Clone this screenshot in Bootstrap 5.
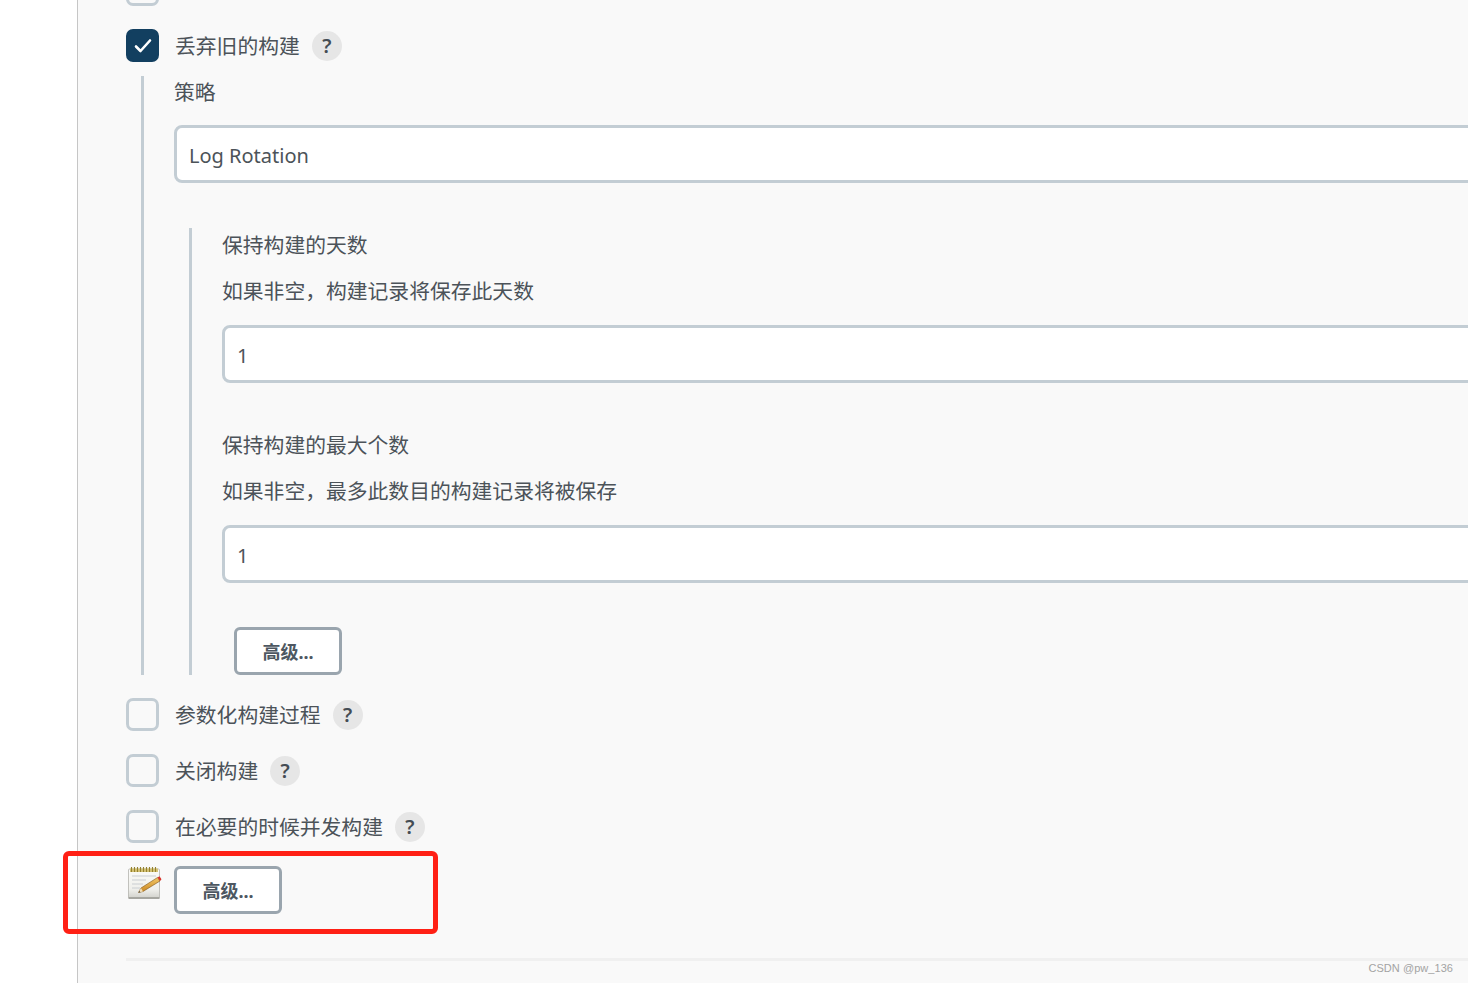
<!DOCTYPE html>
<html lang="zh-CN">
<head>
  <meta charset="UTF-8" />
  <title>丢弃旧的构建</title>
  <link href="https://cdn.jsdelivr.net/npm/bootstrap@5.3.3/dist/css/bootstrap.min.css" rel="stylesheet"/>
  <script src="https://cdn.jsdelivr.net/npm/bootstrap@5.3.3/dist/js/bootstrap.bundle.min.js"></script>
  <style>
    html, body { height: 983px; overflow: hidden; background: #fff; }
    body { font-family: "Noto Sans", "Noto Sans CJK SC", sans-serif; font-size: 20.8px; color: #4c5359; }
    .page-wrap { height: 983px; overflow: hidden; position: relative; }
    .side-gap { width: 77px; flex: none; background: #fff; }
    .main-area { width: 1600px; flex: none; background: #f9f9f9; border-left: 1px solid #c6c6c6; padding-left: 48px; }
    .scroll-up { margin-top: -27px; }

    .opt-row { gap: 16px; margin-bottom: 23px; height: 33px; }
    .opt-row .form-check-input { width: 33px; height: 33px; margin: 0; flex: none; border: 3px solid #c3cdd4; border-radius: 7px; background-color: #f9f9f9; }
    .opt-row .form-check-input:checked { background-color: #123f60; border-color: #123f60; background-size: 20px 20px;
      background-image: url("data:image/svg+xml,%3Csvg xmlns='http://www.w3.org/2000/svg' viewBox='0 0 20 20'%3E%3Cpath fill='none' stroke='%23fff' stroke-width='2.6' stroke-linecap='round' stroke-linejoin='round' d='M3 10.5l4.5 4.5L17 4.5'/%3E%3C/svg%3E"); }
    .opt-text { line-height: 33px; padding-top: 1px; }
    .help-dot { width: 30px; height: 30px; margin-left: -4px; border-radius: 50%; background: #e6e6e6; color: #444c54; font-size: 20px; font-weight: 600; line-height: 30px; text-align: center; }

    .nest-one { border-left: 3px solid #c3cdd4; margin-left: 15px; margin-top: -9px; margin-bottom: 23px; padding-left: 30px; height: 599px; }
    .nest-two { border-left: 3px solid #c3cdd4; margin-left: 15px; padding-left: 30px; height: 447px; margin-top: 45px; }
    .field-name { line-height: 32px; margin-bottom: 17px; }
    .nest-two .field-name { padding-top: 1px; margin-bottom: 14px; }
    .field-desc { line-height: 32px; margin-bottom: 18px; }
    .field-box.form-control, .field-box.form-select { height: 58px; border: 3px solid #c3cdd4; border-radius: 8px; padding: 3px 12px 0; font-size: 20px; color: #4c5359; background-color: #fff; box-shadow: none; }
    .field-gap { margin-bottom: 45px; }
    .adv-btn.btn { width: 108px; height: 48px; padding: 0; border: 3px solid #9aa5ae; border-radius: 6px; background: #fff; color: #4d5761; font-size: 18px; font-weight: 700; line-height: 44px; }
    .adv-push { margin-left: 12px; margin-top: 44px; }
    .note-row { gap: 12px; height: 48px; }
    .note-icon { width: 34px; height: 34px; flex: none; margin-left: 2px; }
    .foot-line { height: 3px; background: #f0f0f0; margin-top: 44px; }

    .red-mark { position: absolute; left: 63px; top: 851px; width: 375px; height: 83px; border: 5px solid #ff2015; border-radius: 6px; }
    .csdn-mark { position: absolute; right: 15px; top: 961px; font-family: "Liberation Sans", sans-serif; font-size: 11px; letter-spacing: .05px; line-height: 14px; color: #a3a3a3; }
  </style>
</head>
<body>

  <div class="page-wrap d-flex">
    <div class="side-gap"></div>
    <div class="main-area">
      <div class="scroll-up">

        <div class="opt-row d-flex align-items-center">
          <input class="form-check-input" type="checkbox">
          <span class="opt-text">&nbsp;</span>
        </div>

        <div class="opt-row d-flex align-items-center">
          <input class="form-check-input" type="checkbox" checked>
          <span class="opt-text">丢弃旧的构建</span>
          <span class="help-dot">?</span>
        </div>

        <!-- 策略 -->
        <div class="nest-one">
          <div class="field-name">策略</div>
          <select class="form-select field-box"><option>Log Rotation</option></select>

          <div class="nest-two">
            <div class="field-name">保持构建的天数</div>
            <div class="field-desc">如果非空，构建记录将保存此天数</div>
            <input type="text" class="form-control field-box field-gap" value="1">

            <div class="field-name">保持构建的最大个数</div>
            <div class="field-desc">如果非空，最多此数目的构建记录将被保存</div>
            <input type="text" class="form-control field-box" value="1">

            <div class="adv-push"><button type="button" class="btn adv-btn">高级...</button></div>
          </div>
        </div>

        <div class="opt-row d-flex align-items-center">
          <input class="form-check-input" type="checkbox">
          <span class="opt-text">参数化构建过程</span>
          <span class="help-dot">?</span>
        </div>
        <div class="opt-row d-flex align-items-center">
          <input class="form-check-input" type="checkbox">
          <span class="opt-text">关闭构建</span>
          <span class="help-dot">?</span>
        </div>
        <div class="opt-row d-flex align-items-center">
          <input class="form-check-input" type="checkbox">
          <span class="opt-text">在必要的时候并发构建</span>
          <span class="help-dot">?</span>
        </div>

        <div class="note-row d-flex align-items-start">
          <svg class="note-icon" viewBox="0 0 34 34">
            <defs>
              <linearGradient id="pageFill" x1="0" y1="0" x2="0" y2="1">
                <stop offset="0" stop-color="#fbfbf9"/><stop offset="0.7" stop-color="#efefeb"/><stop offset="1" stop-color="#d2d2cc"/>
              </linearGradient>
              <linearGradient id="pencilFill" x1="0" y1="0" x2="0" y2="1">
                <stop offset="0" stop-color="#f2c766"/><stop offset="1" stop-color="#c9851f"/>
              </linearGradient>
            </defs>
            <rect x="0.500" y="3" width="31" height="29" rx="1" fill="url(#pageFill)" stroke="#b4b4ae" stroke-width="0.800"/>
            <rect x="0.500" y="31" width="31" height="2" fill="#a6a6a0"/>
            <rect x="2" y="2.500" width="28" height="3.500" fill="#d6c375"/>
            <path d="M3.500 1v5M6.500 1v5M9.500 1v5M12.500 1v5M15.500 1v5M18.500 1v5M21.500 1v5M24.500 1v5M27.500 1v5" stroke="#94812f" stroke-width="1.100"/>
            <path d="M4 10h24M4 14h14M4 18h11M4 22h8" stroke="#c9ced2" stroke-width="1.200"/>
            <path d="M10.500 26.500l2.500-4.500L29.500 11.500l2.500 3.500L15 25.500z" fill="url(#pencilFill)" stroke="#80561a" stroke-width="0.600"/>
            <path d="M10.500 26.500l2.500-4.500 2 3.500z" fill="#f0dfba"/>
            <path d="M10.500 26.500l.9-1.600 1.100 1.300z" fill="#333"/>
            <path d="M29.500 11.500l2-1.300 2 3-1.500 1.800z" fill="#d8322a"/>
          </svg>
          <button type="button" class="btn adv-btn">高级...</button>
        </div>

        <div class="foot-line"></div>
      </div>
    </div>

    <div class="red-mark"></div>
    <div class="csdn-mark">CSDN @pw_136</div>
  </div>

</body>
</html>
